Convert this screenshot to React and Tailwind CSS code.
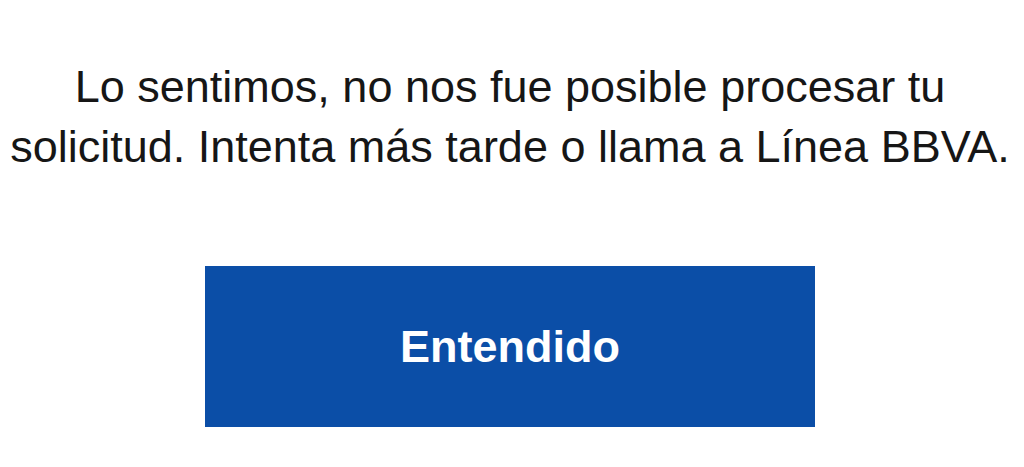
export default function App() {
  return (
    <div
      className="min-h-[467px] w-full bg-white flex flex-col items-center pt-[57px] pr-[4px]"
      style={{ fontFamily: '"Liberation Sans", Arial, sans-serif' }}
    >
      {/* Mensaje de error */}
      <p className="text-[45px] leading-[60px] text-[#161616] text-center whitespace-nowrap">
        Lo sentimos, no nos fue posible procesar tu
        <br />
        solicitud. Intenta más tarde o llama a Línea BBVA.
      </p>

      <button className="mt-[89px] w-[610px] h-[161px] bg-[#0b4ea7] text-white text-[45px] font-bold flex items-center justify-center">
        Entendido
      </button>
    </div>
  );
}
